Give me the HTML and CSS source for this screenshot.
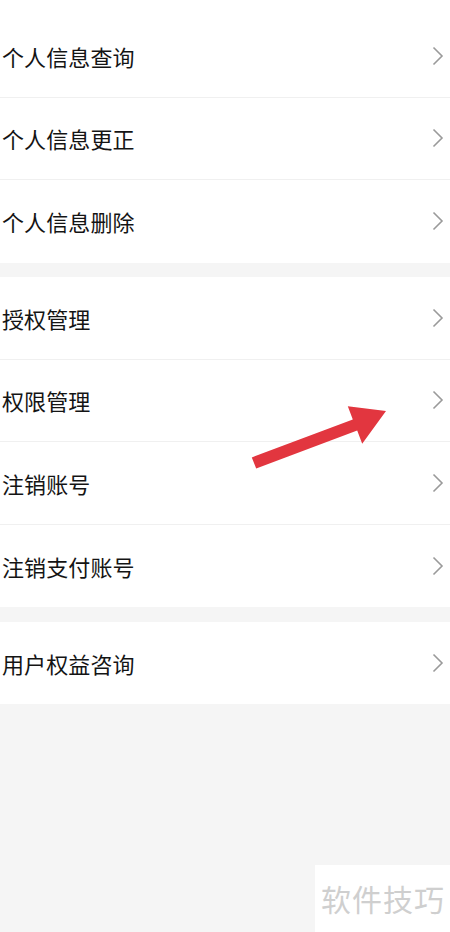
FILE: index.html
```html
<!DOCTYPE html>
<html lang="zh-CN">
<head>
<meta charset="utf-8">
<link rel="stylesheet" href="styles.css">
</head>
<body>
<div class="page">
  <div class="top"></div>
  <div class="section">
    <div class="row"><span class="label">个人信息查询</span><svg class="chev" viewBox="0 0 12 20"><path d="M1.5 1.5 L10 10 L1.5 18.5" /></svg></div>
    <div class="row"><span class="label">个人信息更正</span><svg class="chev" viewBox="0 0 12 20"><path d="M1.5 1.5 L10 10 L1.5 18.5" /></svg></div>
    <div class="row"><span class="label">个人信息删除</span><svg class="chev" viewBox="0 0 12 20"><path d="M1.5 1.5 L10 10 L1.5 18.5" /></svg></div>
  </div>
  <div class="section">
    <div class="row"><span class="label">授权管理</span><svg class="chev" viewBox="0 0 12 20"><path d="M1.5 1.5 L10 10 L1.5 18.5" /></svg></div>
    <div class="row"><span class="label">权限管理</span><svg class="chev" viewBox="0 0 12 20"><path d="M1.5 1.5 L10 10 L1.5 18.5" /></svg></div>
    <div class="row"><span class="label">注销账号</span><svg class="chev" viewBox="0 0 12 20"><path d="M1.5 1.5 L10 10 L1.5 18.5" /></svg></div>
    <div class="row"><span class="label">注销支付账号</span><svg class="chev" viewBox="0 0 12 20"><path d="M1.5 1.5 L10 10 L1.5 18.5" /></svg></div>
  </div>
  <div class="section">
    <div class="row"><span class="label">用户权益咨询</span><svg class="chev" viewBox="0 0 12 20"><path d="M1.5 1.5 L10 10 L1.5 18.5" /></svg></div>
  </div>
  <svg class="arrow" viewBox="0 0 450 932" width="450" height="932">
    <polygon points="251.8,457.4 352.8,419.4 347.8,406.3 386,411 362.2,443.7 357.2,430.6 256.2,468.6" />
  </svg>
  <div class="watermark">软件技巧</div>
</div>
</body>
</html>
```

FILE: styles.css
```css
html, body {
  margin: 0;
  padding: 0;
}
body {
  background: #f5f5f5;
  font-family: "Noto Sans CJK SC", "Noto Sans", sans-serif;
}
.page {
  position: relative;
  width: 450px;
  height: 932px;
  overflow: hidden;
}
.top {
  height: 15px;
  background: #fff;
}
.section {
  background: #fff;
  margin-bottom: 14.5px;
}
.row {
  height: 82.5px;
  box-sizing: border-box;
  display: flex;
  align-items: center;
  justify-content: space-between;
  padding: 0 6px 0 2px;
  border-bottom: 1px solid #f0f0f0;
}
.row:last-child {
  border-bottom: none;
}
.label {
  font-size: 22px;
  color: #141414;
  letter-spacing: 0.1px;
}
.chev {
  width: 12px;
  height: 20px;
  fill: none;
  stroke: #9a9a9a;
  stroke-width: 1.6;
}
.arrow {
  position: absolute;
  left: 0;
  top: 0;
  pointer-events: none;
}
.arrow polygon {
  fill: #e2363f;
}
.watermark {
  position: absolute;
  left: 315px;
  top: 865px;
  width: 135px;
  height: 67px;
  background: #fff;
  color: #cfcfcf;
  font-size: 30px;
  line-height: 67px;
  padding-left: 6px;
  box-sizing: border-box;
  letter-spacing: 1px;
}
```
